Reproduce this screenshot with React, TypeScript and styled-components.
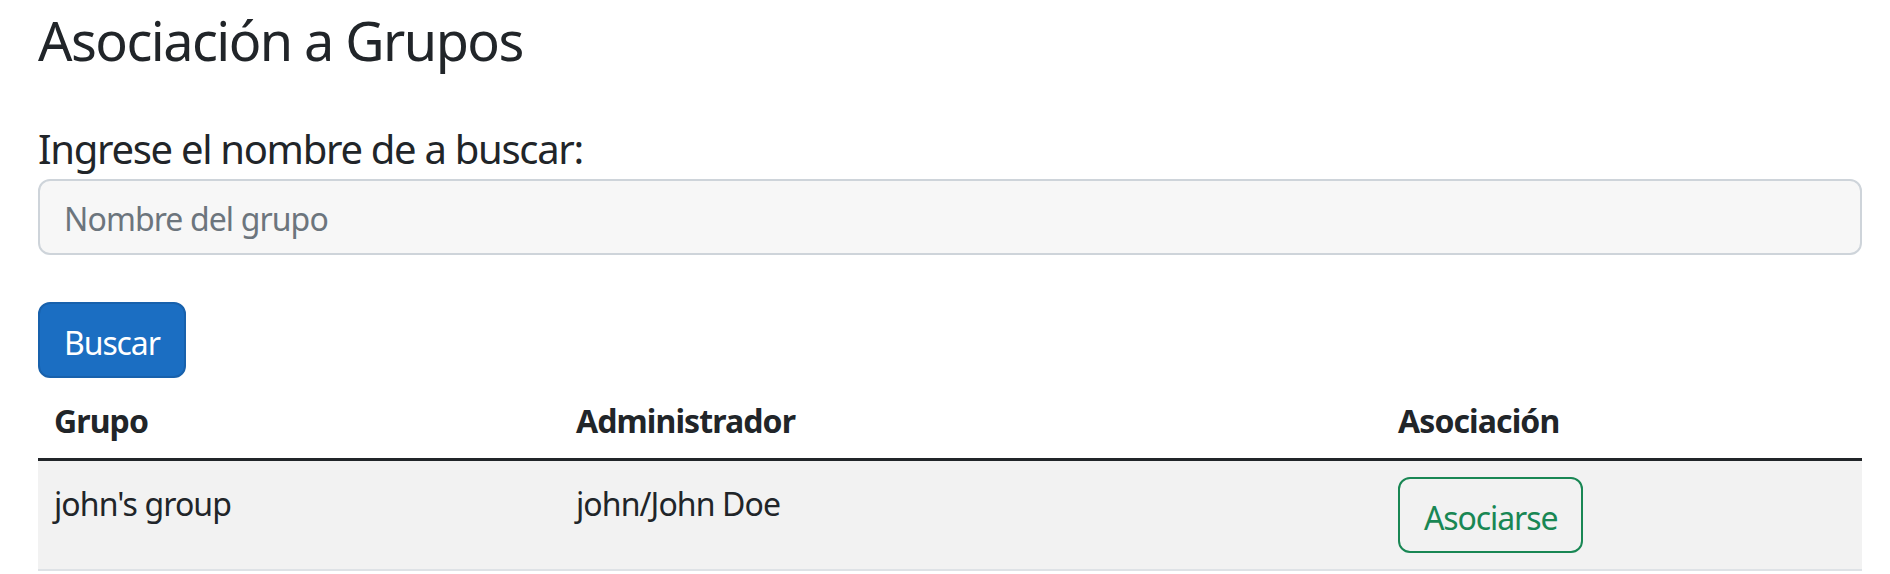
import React from "react";
import styled, { createGlobalStyle } from "styled-components";

const GlobalStyle = createGlobalStyle`
  html, body {
    margin: 0;
    padding: 0;
    background: #ffffff;
  }
  body {
    font-family: "Noto Sans", "Open Sans", sans-serif;
    color: #212529;
    font-size: 32px;
    line-height: 48px;
    letter-spacing: -0.9px;
  }
  * { box-sizing: border-box; }
`;

const Page = styled.main`
  padding: 5px 28px 0 38px;
`;

const Title = styled.h2`
  margin: 0;
  font-size: 54px;
  line-height: 71px;
  font-weight: 400;
  letter-spacing: -1.55px;
`;

const SearchForm = styled.form`
  display: flex;
  flex-direction: column;
  align-items: flex-start;
  margin-top: 43px;
`;

const Label = styled.label`
  display: block;
  font-size: 40px;
  line-height: 60px;
  letter-spacing: -1.3px;
`;

const TextInput = styled.input`
  width: 100%;
  height: 76px;
  padding: 3px 24px 0;
  border: 2px solid #ced4da;
  border-radius: 12px;
  background: #f7f7f7;
  font-family: inherit;
  font-size: 32px;
  letter-spacing: -0.9px;
  color: #212529;
  outline: none;
  &::placeholder {
    color: #6c757d;
  }
`;

const Button = styled.button<{ $variant: "primary" | "outline-success" }>`
  height: 76px;
  padding: 5px 24px 0;
  border-radius: 12px;
  font-family: inherit;
  font-size: 32px;
  line-height: 48px;
  letter-spacing: -1.1px;
  cursor: pointer;
  border: 2px solid
    ${(p) => (p.$variant === "primary" ? "#1861ac" : "#198754")};
  background: ${(p) => (p.$variant === "primary" ? "#1b6ec2" : "transparent")};
  color: ${(p) => (p.$variant === "primary" ? "#ffffff" : "#198754")};
`;

const SubmitButton = styled(Button)`
  margin-top: 47px;
`;

const Table = styled.table`
  width: 100%;
  border-collapse: collapse;
`;

const HeadCell = styled.th<{ $width?: number }>`
  padding: 19px 16px 13px;
  text-align: left;
  font-weight: 700;
  vertical-align: bottom;
  line-height: 48px;
  border-bottom: 3px solid #212529;
  ${(p) => (p.$width ? `width: ${p.$width}px;` : "")}
`;

const BodyRow = styled.tr`
  background: #f2f2f2;
`;

const Cell = styled.td<{ $action?: boolean }>`
  padding: ${(p) => (p.$action ? "16px" : "19px 16px 13px")};
  vertical-align: top;
  line-height: 48px;
  border-bottom: 2px solid #dee2e6;
`;

const rows = [{ group: "john's group", admin: "john/John Doe" }];

export default function App() {
  return (
    <>
      <GlobalStyle />
      <Page>
        <Title>Asociación a Grupos</Title>
        <SearchForm onSubmit={(e) => e.preventDefault()}>
          <Label htmlFor="grupo">Ingrese el nombre de a buscar:</Label>
          <TextInput id="grupo" placeholder="Nombre del grupo" />
          <SubmitButton $variant="primary" type="submit">
            Buscar
          </SubmitButton>
        </SearchForm>
        <Table>
          <thead>
            <tr>
              <HeadCell $width={522}>Grupo</HeadCell>
              <HeadCell $width={822}>Administrador</HeadCell>
              <HeadCell>Asociación</HeadCell>
            </tr>
          </thead>
          <tbody>
            {rows.map((r) => (
              <BodyRow key={r.group}>
                <Cell>{r.group}</Cell>
                <Cell>{r.admin}</Cell>
                <Cell $action>
                  <Button $variant="outline-success" type="button">
                    Asociarse
                  </Button>
                </Cell>
              </BodyRow>
            ))}
          </tbody>
        </Table>
      </Page>
    </>
  );
}
